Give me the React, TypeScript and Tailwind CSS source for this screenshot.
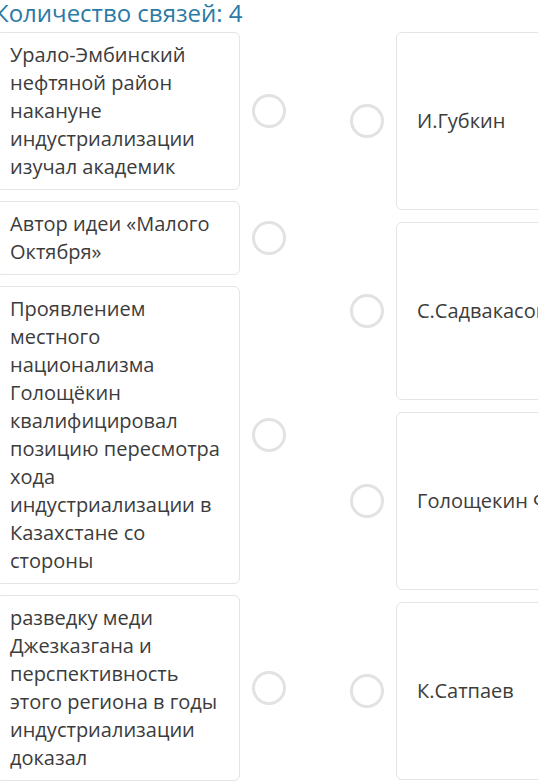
import React from "react";

const leftItems = [
  "Урало-Эмбинский нефтяной район накануне индустриализации изучал академик",
  "Автор идеи «Малого Октября»",
  "Проявлением местного национализма Голощёкин квалифицировал позицию пересмотра хода индустриализации в Казахстане со стороны",
  "разведку меди Джезказгана и перспективность этого региона в годы индустриализации доказал",
];

const rightItems = ["И.Губкин", "С.Садвакасов", "Голощекин Ф.", "К.Сатпаев"];

// empty radio-like dot used to link two sides
const Dot = () => (
  <div className="w-[34px] h-[34px] shrink-0 rounded-full border-[3px] border-[#e2e2e2] bg-white" />
);

export default function App() {
  return (
    <div
      className="w-[538px] h-[782px] overflow-hidden bg-white text-[#3c3c3c]"
      style={{ fontFamily: '"Open Sans", "Liberation Sans", sans-serif' }}
    >
      <div className="ml-[-6px] mt-[-2px] h-[34px] text-[24px] leading-[30px] text-[#2b7aa5] whitespace-nowrap">
        Количество связей: 4
      </div>

      <div className="flex items-start">
        {/* left column: questions */}
        <div className="ml-[-4px] flex flex-col gap-[11px]">
          {leftItems.map((t, i) => (
            <div key={i} className="flex items-center">
              <div className="w-[244px] rounded-md border border-[#e4e4e4] pl-[13px] pr-[8px] py-[8px] text-[20px] leading-[28px]">
                {t}
              </div>
              <div className="ml-[12px]">
                <Dot />
              </div>
            </div>
          ))}
        </div>

        {/* right column: answers */}
        <div className="ml-[64px] flex flex-col gap-[12px]">
          {rightItems.map((t, i) => (
            <div key={i} className="flex items-center">
              <Dot />
              <div className="ml-[12px] w-[200px] h-[178px] rounded-md border border-[#e4e4e4] flex items-center pl-[20px] text-[20px] leading-[28px] whitespace-nowrap overflow-hidden">
                {t}
              </div>
            </div>
          ))}
        </div>
      </div>
    </div>
  );
}
